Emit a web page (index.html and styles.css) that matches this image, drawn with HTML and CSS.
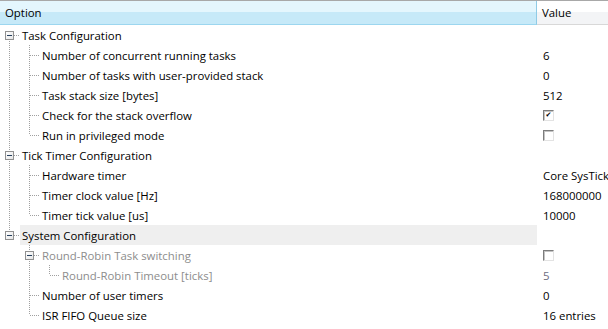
FILE: index.html
```html
<!DOCTYPE html>
<html lang="en">
<head>
    <meta charset="UTF-8">
    <title>Options</title>
    <link rel="stylesheet" href="styles.css">
</head>
<body>
    <div class="grid">
        <div class="head">
            <div class="head-option">Option</div>
            <div class="head-value">Value</div>
        </div>

        <div class="row">
            <div class="tree"><span class="g first"><span class="box"></span></span><span class="label">Task Configuration</span></div>
            <div class="value"></div>
        </div>
        <div class="row">
            <div class="tree"><span class="g pipe"></span><span class="g tee"></span><span class="label">Number of concurrent running tasks</span></div>
            <div class="value">6</div>
        </div>
        <div class="row">
            <div class="tree"><span class="g pipe"></span><span class="g tee"></span><span class="label">Number of tasks with user-provided stack</span></div>
            <div class="value">0</div>
        </div>
        <div class="row">
            <div class="tree"><span class="g pipe"></span><span class="g tee"></span><span class="label">Task stack size [bytes]</span></div>
            <div class="value">512</div>
        </div>
        <div class="row">
            <div class="tree"><span class="g pipe"></span><span class="g tee"></span><span class="label">Check for the stack overflow</span></div>
            <div class="value"><span class="check">&#10004;</span></div>
        </div>
        <div class="row">
            <div class="tree"><span class="g pipe"></span><span class="g ell"></span><span class="label">Run in privileged mode</span></div>
            <div class="value"><span class="check"></span></div>
        </div>
        <div class="row">
            <div class="tree"><span class="g tee"><span class="box"></span></span><span class="label">Tick Timer Configuration</span></div>
            <div class="value"></div>
        </div>
        <div class="row">
            <div class="tree"><span class="g pipe"></span><span class="g tee"></span><span class="label">Hardware timer</span></div>
            <div class="value">Core SysTick</div>
        </div>
        <div class="row">
            <div class="tree"><span class="g pipe"></span><span class="g tee"></span><span class="label">Timer clock value [Hz]</span></div>
            <div class="value">168000000</div>
        </div>
        <div class="row">
            <div class="tree"><span class="g pipe"></span><span class="g ell"></span><span class="label">Timer tick value [us]</span></div>
            <div class="value">10000</div>
        </div>
        <div class="row">
            <div class="tree"><span class="g ell"><span class="box"></span></span><span class="label selected">System Configuration</span></div>
            <div class="value"></div>
        </div>
        <div class="row disabled">
            <div class="tree"><span class="g"></span><span class="g tee"><span class="box"></span></span><span class="label">Round-Robin Task switching</span></div>
            <div class="value"><span class="check"></span></div>
        </div>
        <div class="row disabled">
            <div class="tree"><span class="g"></span><span class="g pipe"></span><span class="g ell"></span><span class="label">Round-Robin Timeout [ticks]</span></div>
            <div class="value">5</div>
        </div>
        <div class="row">
            <div class="tree"><span class="g"></span><span class="g tee"></span><span class="label">Number of user timers</span></div>
            <div class="value">0</div>
        </div>
        <div class="row">
            <div class="tree"><span class="g"></span><span class="g ell"></span><span class="label">ISR FIFO Queue size</span></div>
            <div class="value">16 entries</div>
        </div>
    </div>
</body>
</html>
```

FILE: styles.css
```css
body {
    margin: 0;
    background: #fff;
    font-family: 'Open Sans', 'Noto Sans', sans-serif;
    font-size: 11.4px;
    color: #000;
}
.grid {
    width: 608px;
}
.head {
    display: grid;
    grid-template-columns: 537px 1fr;
    height: 24px;
    border-top: 1px solid #a8a8a8;
}
.head-option {
    padding-left: 5px;
    padding-top: 1px;
    line-height: 22px;
    background: linear-gradient(to bottom, #e4f6fd 0, #e4f6fd 50%, #c6e9f8 50%, #c6e9f8 100%);
    border-bottom: 1px solid #9cd6ef;
    border-right: 1px solid #8fcbe6;
}
.head-value {
    padding-left: 5px;
    padding-top: 1px;
    line-height: 22px;
    background: linear-gradient(to bottom, #ffffff 0, #ffffff 50%, #f3f4f6 50%, #f3f4f6 100%);
    border-bottom: 1px solid #d8d8d8;
}
.row {
    display: grid;
    grid-template-columns: 537px 1fr;
    height: 20px;
}
.tree {
    display: flex;
    align-items: stretch;
}
.g {
    width: 20px;
    flex: none;
    display: flex;
    align-items: center;
    justify-content: flex-start;
    background-repeat: no-repeat;
}
/* dotted tree guides drawn as backgrounds */
.pipe {
    background-image: repeating-linear-gradient(to bottom, #a0a0a0 0 1px, transparent 1px 2px);
    background-size: 1px 20px;
    background-position: 9px 0;
}
.tee {
    background-image:
        repeating-linear-gradient(to bottom, #a0a0a0 0 1px, transparent 1px 2px),
        repeating-linear-gradient(to right, #a0a0a0 0 1px, transparent 1px 2px);
    background-size: 1px 20px, 11px 1px;
    background-position: 9px 0, 10px 10px;
}
.ell {
    background-image:
        repeating-linear-gradient(to bottom, #a0a0a0 0 1px, transparent 1px 2px),
        repeating-linear-gradient(to right, #a0a0a0 0 1px, transparent 1px 2px);
    background-size: 1px 10px, 11px 1px;
    background-position: 9px 0, 10px 10px;
}
.first {
    background-image:
        repeating-linear-gradient(to bottom, #a0a0a0 0 1px, transparent 1px 2px),
        repeating-linear-gradient(to right, #a0a0a0 0 1px, transparent 1px 2px);
    background-size: 1px 10px, 11px 1px;
    background-position: 9px 10px, 10px 10px;
}
.box {
    width: 7px;
    height: 7px;
    margin-left: 5px;
    margin-top: 1px;
    border: 1px solid #919191;
    background: linear-gradient(to bottom right, #ffffff, #e6e6e6);
    display: flex;
    align-items: center;
    justify-content: center;
}
.box::after {
    content: "";
    width: 5px;
    height: 1px;
    background: #27415f;
}
.label {
    flex: 1;
    padding-left: 2px;
    padding-top: 1px;
    line-height: 19px;
    white-space: nowrap;
}
.label.selected {
    background: #efefef;
}
.value {
    padding-left: 6px;
    padding-top: 1px;
    line-height: 19px;
    white-space: nowrap;
    display: flex;
    align-items: center;
}
.disabled .label {
    color: #8d8d8d;
}
.disabled .value {
    color: #6d6d80;
}
.check {
    width: 9px;
    height: 9px;
    margin-top: -1px;
    border-top: 1px solid #7c7c7c;
    border-left: 1px solid #7c7c7c;
    border-right: 1px solid #e3e3e3;
    border-bottom: 1px solid #e3e3e3;
    box-shadow: inset 1px 1px 0 #c4c4c4;
    background: #fff;
    font-size: 7px;
    font-weight: bold;
    line-height: 9px;
    text-align: center;
    color: #000;
    font-family: 'DejaVu Sans', sans-serif;
}
```
